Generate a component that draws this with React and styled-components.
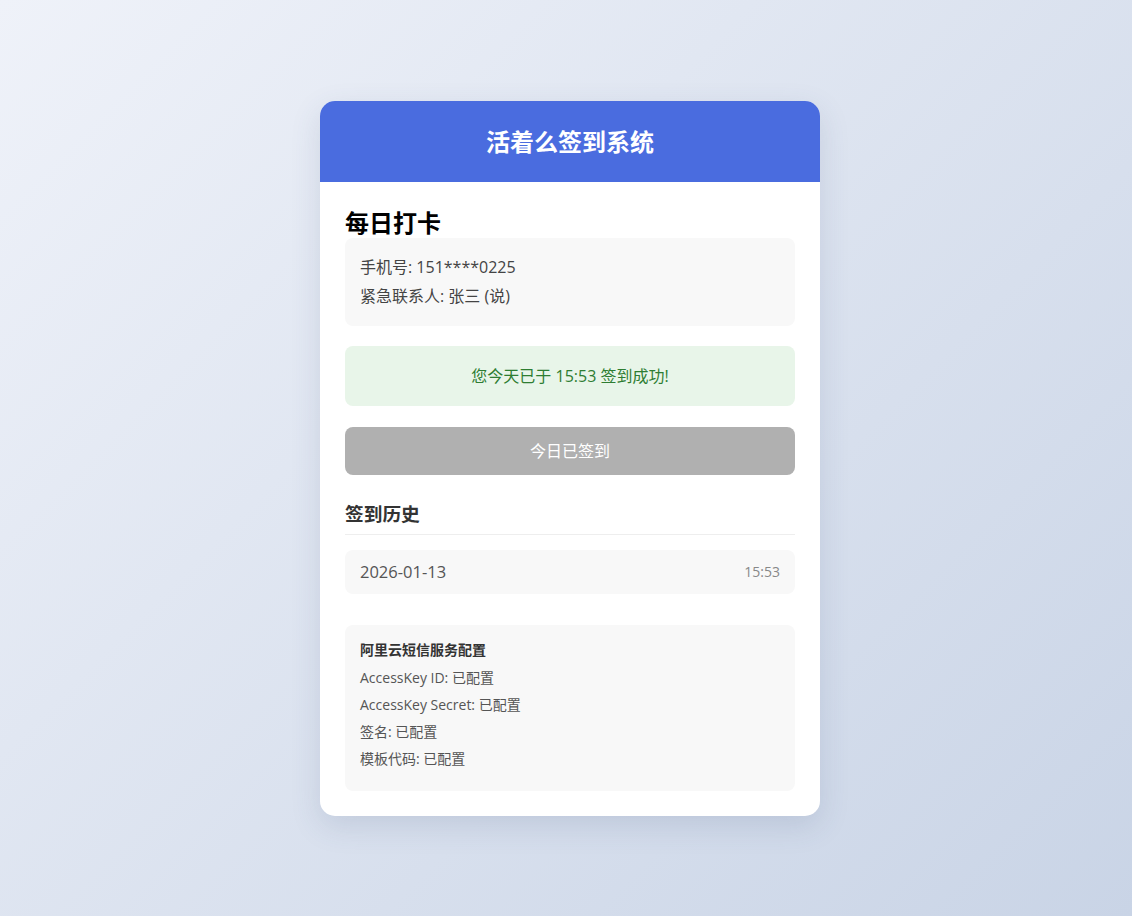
import React from "react";
import styled, { createGlobalStyle } from "styled-components";

const GlobalStyle = createGlobalStyle`
  * { box-sizing: border-box; }
  html, body { margin: 0; padding: 0; }
  body {
    font-family: "Open Sans", "Noto Sans CJK SC", sans-serif;
    background: linear-gradient(135deg, #eff2f9 0%, #c9d4e6 100%);
    min-height: 100vh;
  }
`;

const configItems = [
  "AccessKey ID: 已配置",
  "AccessKey Secret: 已配置",
  "签名: 已配置",
  "模板代码: 已配置",
];

function App() {
  return (
    <Page>
      <GlobalStyle />
      <Card>
        <Header>
          <Title>活着么签到系统</Title>
        </Header>
        <Body>
          <SectionTitle>每日打卡</SectionTitle>
          <InfoBox>
            <InfoLine>手机号: 151****0225</InfoLine>
            <InfoLine>紧急联系人: 张三 (说)</InfoLine>
          </InfoBox>
          <SuccessBox>您今天已于 15:53 签到成功!</SuccessBox>
          <CheckButton disabled>今日已签到</CheckButton>
          <HistoryTitle>签到历史</HistoryTitle>
          <HistoryItem>
            <HistoryDate>2026-01-13</HistoryDate>
            <HistoryTime>15:53</HistoryTime>
          </HistoryItem>
          <ConfigBox>
            <ConfigTitle>阿里云短信服务配置</ConfigTitle>
            {configItems.map((item) => (
              <ConfigLine key={item}>{item}</ConfigLine>
            ))}
          </ConfigBox>
        </Body>
      </Card>
    </Page>
  );
}

const Page = styled.div`
  min-height: 100vh;
  display: flex;
  align-items: center;
  justify-content: center;
  padding-left: 8px;
`;

const Card = styled.div`
  width: 500px;
  background: #fff;
  border-radius: 15px;
  overflow: hidden;
  box-shadow: 0 10px 30px rgba(60, 80, 120, 0.15);
`;

const Header = styled.div`
  background: #4a6cdf;
  padding: 25px 20px;
  text-align: center;
`;

const Title = styled.h1`
  margin: 0;
  color: #fff;
  font-size: 24px;
  line-height: 31px;
  font-weight: 700;
`;

const Body = styled.div`
  padding: 25px;
`;

const SectionTitle = styled.h2`
  margin: 0;
  font-size: 24px;
  line-height: 31px;
  font-weight: 700;
  color: #000;
`;

const InfoBox = styled.div`
  background: #f8f8f8;
  border-radius: 8px;
  padding: 15px;
`;

const InfoLine = styled.div`
  font-size: 16px;
  line-height: 29px;
  color: #444;
`;

const SuccessBox = styled.div`
  margin-top: 20px;
  background: #e8f5e9;
  color: #2e7d32;
  border-radius: 8px;
  padding: 20px;
  text-align: center;
  font-size: 16px;
  line-height: 20px;
`;

const CheckButton = styled.button`
  display: block;
  width: 100%;
  margin-top: 21px;
  border: none;
  border-radius: 8px;
  background: #b0b0b0;
  color: #fff;
  font-family: inherit;
  font-size: 16px;
  line-height: 20px;
  padding: 14px;
`;

const HistoryTitle = styled.h3`
  margin: 26px 0 15px;
  padding-bottom: 8px;
  border-bottom: 1px solid #eee;
  font-size: 18.72px;
  line-height: 25px;
  font-weight: 700;
  color: #333;
`;

const HistoryItem = styled.div`
  display: flex;
  justify-content: space-between;
  align-items: center;
  background: #f8f8f8;
  border-radius: 8px;
  padding: 12px 15px;
`;

const HistoryDate = styled.span`
  font-size: 16.5px;
  line-height: 20px;
  color: #555;
`;

const HistoryTime = styled.span`
  font-size: 14px;
  line-height: 20px;
  color: #888;
`;

const ConfigBox = styled.div`
  margin-top: 31px;
  background: #f8f8f8;
  border-radius: 8px;
  padding: 15px;
`;

const ConfigTitle = styled.div`
  font-size: 14px;
  line-height: 20px;
  font-weight: 700;
  color: #333;
  margin-bottom: 8px;
`;

const ConfigLine = styled.div`
  font-size: 14px;
  line-height: 20px;
  color: #555;
  margin-bottom: 7px;
`;

export default App;
